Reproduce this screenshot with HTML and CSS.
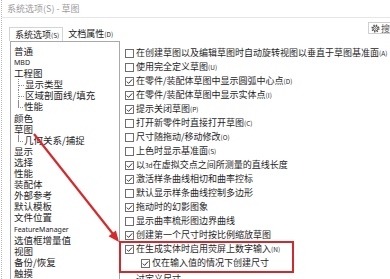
FILE: index.html
```html
<!DOCTYPE html>
<html lang="zh-CN">
<head>
    <meta charset="UTF-8">
    <meta name="viewport" content="width=device-width, initial-scale=1.0">
    <title>系统选项 - 草图</title>
    <link rel="stylesheet" href="styles.css">
</head>
<body>
    <div class="window">
        <!-- title bar -->
        <div class="titlebar">系统选项(S) - 草图</div>

        <!-- tabs + search -->
        <div class="tabbar">
            <div class="tab active">系统选项<span class="key">(S)</span></div>
            <div class="tab">文档属性<span class="key">(D)</span></div>
            <div class="search">
                <svg width="9" height="9" viewBox="0 0 9 9">
                    <circle cx="4.5" cy="4.5" r="3.3" fill="none" stroke="#555" stroke-width="1.6" stroke-dasharray="1.3 1.3"/>
                    <circle cx="4.5" cy="4.5" r="2.4" fill="none" stroke="#555" stroke-width="0.9"/>
                    <circle cx="4.5" cy="4.5" r="0.9" fill="none" stroke="#555" stroke-width="0.8"/>
                </svg>
                <span>搜</span>
            </div>
        </div>

        <div class="content">
            <!-- left tree -->
            <ul class="tree">
                <li>普通</li>
                <li class="latin">MBD</li>
                <li>工程图</li>
                <li class="child">显示类型</li>
                <li class="child">区域剖面线/填充</li>
                <li class="child last">性能</li>
                <li>颜色</li>
                <li>草图</li>
                <li class="child last">几何关系/捕捉</li>
                <li>显示</li>
                <li>选择</li>
                <li>性能</li>
                <li>装配体</li>
                <li>外部参考</li>
                <li>默认模板</li>
                <li>文件位置</li>
                <li class="latin">FeatureManager</li>
                <li>选值框增量值</li>
                <li>视图</li>
                <li>备份/恢复</li>
                <li>触摸</li>
            </ul>

            <!-- options -->
            <div class="options">
                <div class="opt"><span class="cb"></span>在创建草图以及编辑草图时自动旋转视图以垂直于草图基准面<span class="key">(A)</span></div>
                <div class="opt"><span class="cb"></span>使用完全定义草图<span class="key">(U)</span></div>
                <div class="opt"><span class="cb on"><svg viewBox="0 0 7 7"><polyline points="0.8,3.6 2.6,5.4 6.2,1.4"/></svg></span>在零件/装配体草图中显示圆弧中心点<span class="key">(D)</span></div>
                <div class="opt"><span class="cb on"><svg viewBox="0 0 7 7"><polyline points="0.8,3.6 2.6,5.4 6.2,1.4"/></svg></span>在零件/装配体草图中显示实体点<span class="key">(I)</span></div>
                <div class="opt"><span class="cb on"><svg viewBox="0 0 7 7"><polyline points="0.8,3.6 2.6,5.4 6.2,1.4"/></svg></span>提示关闭草图<span class="key">(P)</span></div>
                <div class="opt"><span class="cb"></span>打开新零件时直接打开草图<span class="key">(C)</span></div>
                <div class="opt"><span class="cb"></span>尺寸随拖动/移动修改<span class="key">(O)</span></div>
                <div class="opt"><span class="cb"></span>上色时显示基准面<span class="key">(S)</span></div>
                <div class="opt"><span class="cb on"><svg viewBox="0 0 7 7"><polyline points="0.8,3.6 2.6,5.4 6.2,1.4"/></svg></span>以 <span class="key">3d</span> 在虚拟交点之间所测量的直线长度</div>
                <div class="opt"><span class="cb on"><svg viewBox="0 0 7 7"><polyline points="0.8,3.6 2.6,5.4 6.2,1.4"/></svg></span>激活样条曲线相切和曲率控标</div>
                <div class="opt"><span class="cb"></span>默认显示样条曲线控制多边形</div>
                <div class="opt"><span class="cb on"><svg viewBox="0 0 7 7"><polyline points="0.8,3.6 2.6,5.4 6.2,1.4"/></svg></span>拖动时的幻影图象</div>
                <div class="opt"><span class="cb"></span>显示曲率梳形图边界曲线</div>
                <div class="opt"><span class="cb on"><svg viewBox="0 0 7 7"><polyline points="0.8,3.6 2.6,5.4 6.2,1.4"/></svg></span>创建第一个尺寸时按比例缩放草图</div>
                <div class="highlight">
                    <div class="opt"><span class="cb on"><svg viewBox="0 0 7 7"><polyline points="0.8,3.6 2.6,5.4 6.2,1.4"/></svg></span>在生成实体时启用荧屏上数字输入<span class="key">(N)</span></div>
                    <div class="opt sub"><span class="cb on"><svg viewBox="0 0 7 7"><polyline points="0.8,3.6 2.6,5.4 6.2,1.4"/></svg></span>仅在输入值的情况下创建尺寸</div>
                </div>
                <div class="opt plain">过定义尺寸</div>
            </div>
        </div>

        <!-- red annotation arrow -->
        <svg class="arrow" width="390" height="279" viewBox="0 0 390 279">
            <line x1="34" y1="134" x2="113" y2="234" stroke="#d7282a" stroke-width="2.2"/>
            <polygon points="119,242 108.5,236.3 115.9,230.4" fill="#d7282a"/>
        </svg>
    </div>
</body>
</html>
```

FILE: styles.css
```css
body {
    margin: 0;
    background-color: #fff;
    font-family: "Noto Sans CJK SC", "Noto Sans", sans-serif;
    color: #1e1e1e;
}
.window {
    position: relative;
    width: 389px;
    height: 279px;
    margin-left: 1px;
    border-left: 1px dotted #b8b8b8;
    box-sizing: border-box;
    overflow: hidden;
}
.titlebar {
    height: 18px;
    line-height: 17px;
    padding-left: 5px;
    font-size: 9px;
    color: #9c9c9c;
    border-bottom: 1px solid #e6e6e6;
    box-sizing: border-box;
}
.tabbar {
    display: flex;
    align-items: flex-end;
    height: 23px;
    padding-left: 7px;
}
.tab {
    height: 14px;
    line-height: 13px;
    font-size: 9px;
    padding: 0 3px 0 5px;
    box-sizing: border-box;
    color: #222;
}
.tab.active {
    border: 1px solid #d4d4d4;
    border-bottom: none;
}
.key {
    font-size: 6.5px;
}
.search {
    margin-left: auto;
    align-self: flex-start;
    margin-top: 4px;
    width: 22px;
    height: 12px;
    border: 1px solid #cfcfcf;
    border-right: none;
    box-sizing: border-box;
    display: flex;
    align-items: center;
    gap: 1px;
    padding-left: 2px;
    font-size: 9px;
    color: #555;
}
.content {
    display: flex;
    height: 238px;
}
.tree {
    list-style: none;
    margin: 0 0 0 8px;
    width: 110px;
    flex: none;
    padding: 4px 0 0 3px;
    border: 1px solid #a9a9a9;
    border-bottom: none;
    box-sizing: border-box;
    font-size: 9.5px;
    line-height: 11.1px;
    white-space: nowrap;
}
.tree li {
    height: 11.1px;
}
.tree .latin {
    font-family: "Noto Sans", sans-serif;
    font-size: 7px;
}
.tree .child {
    margin-left: 4px;
    border-left: 1px dotted #8c8c8c;
}
.tree .child.last {
    border-left: none;
    background: linear-gradient(#8c8c8c, #8c8c8c) no-repeat 0 0 / 1px 6px;
}
.tree .child::before {
    content: "";
    display: inline-block;
    width: 5px;
    border-top: 1px dotted #8c8c8c;
    vertical-align: middle;
    margin-right: 1px;
}
.options {
    padding: 5px 0 0 5px;
    font-size: 9px;
    line-height: 14px;
    white-space: nowrap;
}
.opt {
    display: flex;
    align-items: center;
    height: 14px;
}
.opt.sub {
    padding-left: 16px;
}
.opt.plain {
    padding-left: 11px;
}
.cb {
    flex: none;
    width: 9px;
    height: 9px;
    margin-right: 2px;
    border: 1px solid #6e6e6e;
    box-sizing: border-box;
    background-color: #fff;
    display: flex;
}
.cb svg {
    width: 7px;
    height: 7px;
    fill: none;
    stroke: #333;
    stroke-width: 1;
}
.highlight {
    margin-left: -5px;
    padding-left: 5px;
    padding-bottom: 2px;
    width: 168px;
    outline: 2px solid #d5282b;
    outline-offset: -1px;
}
.arrow {
    position: absolute;
    top: 0;
    left: -2px;
    pointer-events: none;
}
```
